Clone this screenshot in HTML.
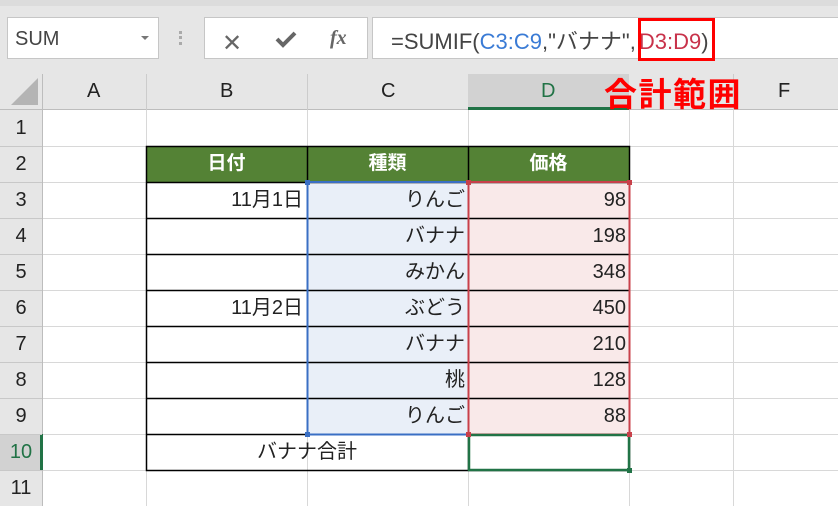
<!DOCTYPE html><html><head><meta charset="utf-8"><style>
*{margin:0;padding:0;box-sizing:border-box}
body{width:838px;height:506px;overflow:hidden;background:#fff;font-family:"Liberation Sans","Noto Sans CJK JP",sans-serif;position:relative}
.a{position:absolute}
.t{font-size:20px;color:#222}
</style></head><body>
<div class="a" style="left:0;top:0;width:838px;height:110px;background:#e6e6e6"></div>
<div class="a" style="left:0;top:0;width:838px;height:6px;background:#dcdcdc"></div>
<div class="a" style="left:7px;top:17px;width:152px;height:42px;background:#fff;border:1px solid #c6c6c6"></div>
<div class="a t" style="left:15px;top:28px;color:#444">SUM</div>
<div class="a" style="left:141px;top:36px;border-left:4px solid transparent;border-right:4px solid transparent;border-top:4px solid #777"></div>
<div class="a" style="left:179px;top:31px;width:3px;height:14px;border-left:3px dotted #aaa"></div>
<div class="a" style="left:204px;top:17px;width:164px;height:42px;background:#fff;border:1px solid #c6c6c6"></div>
<div class="a" style="left:222px;top:29px;font-size:24px;color:#666">✕</div>
<svg class="a" style="left:274px;top:30px" width="24" height="18"><path d="M3 9 L9 15 L21 3" stroke="#666" stroke-width="4" fill="none"/></svg>
<div class="a" style="left:330px;top:27px;font-family:'Liberation Serif',serif;font-style:italic;font-weight:bold;font-size:20px;color:#666">fx</div>
<div class="a" style="left:372px;top:17px;width:466px;height:42px;background:#fff;border:1px solid #c6c6c6;border-right:none"></div>
<div class="a" style="left:391px;top:24px;font-size:22px;color:#444;white-space:nowrap">=SUMIF(<span style="color:#3a7bd5">C3:C9</span>,"バナナ",<span style="color:#c8324a;margin-left:3px">D3:D9</span>)</div>
<div class="a" style="left:638px;top:18px;width:77px;height:43px;border:3px solid #f00"></div>
<div class="a" style="left:0;top:109px;width:838px;height:1px;background:#bdbdbd"></div>
<div class="a" style="left:42px;top:74px;width:1px;height:432px;background:#bdbdbd"></div>
<svg class="a" style="left:11px;top:78px" width="28" height="28"><path d="M27 0 L27 27 L0 27 Z" fill="#b4b4b4"/></svg>
<div class="a" style="left:468px;top:74px;width:161px;height:36px;background:#d2d2d2"></div>
<div class="a" style="left:468px;top:107px;width:161px;height:3px;background:#217346"></div>
<div class="a t" style="left:87px;top:80px">A</div>
<div class="a t" style="left:220px;top:80px">B</div>
<div class="a t" style="left:381px;top:80px">C</div>
<div class="a t" style="left:541px;top:80px;color:#217346">D</div>
<div class="a t" style="left:778px;top:80px">F</div>
<div class="a" style="left:146px;top:74px;width:1px;height:36px;background:#ccc"></div>
<div class="a" style="left:307px;top:74px;width:1px;height:36px;background:#ccc"></div>
<div class="a" style="left:733px;top:74px;width:1px;height:36px;background:#ccc"></div>
<div class="a" style="left:604px;top:68px;font-size:33px;font-weight:bold;color:#f00;letter-spacing:1.5px">合計範囲</div>
<div class="a" style="left:0;top:110px;width:42px;height:396px;background:#e6e6e6"></div>
<div class="a" style="left:0;top:434px;width:42px;height:36px;background:#d2d2d2"></div>
<div class="a" style="left:40px;top:434px;width:3px;height:36px;background:#217346"></div>
<svg class="a" style="left:0;top:0" width="838" height="506">
<g stroke="#d8d8d8" stroke-width="1">
<line x1="43" y1="146.5" x2="838" y2="146.5"/><line x1="43" y1="182.5" x2="838" y2="182.5"/><line x1="43" y1="218.5" x2="838" y2="218.5"/><line x1="43" y1="254.5" x2="838" y2="254.5"/><line x1="43" y1="290.5" x2="838" y2="290.5"/><line x1="43" y1="326.5" x2="838" y2="326.5"/><line x1="43" y1="362.5" x2="838" y2="362.5"/><line x1="43" y1="398.5" x2="838" y2="398.5"/><line x1="43" y1="434.5" x2="838" y2="434.5"/><line x1="43" y1="470.5" x2="838" y2="470.5"/>
<line x1="146.5" y1="110" x2="146.5" y2="506"/><line x1="307.5" y1="110" x2="307.5" y2="506"/><line x1="468.5" y1="110" x2="468.5" y2="506"/><line x1="629.5" y1="110" x2="629.5" y2="506"/><line x1="733.5" y1="110" x2="733.5" y2="506"/>
</g>
<g stroke="#c8c8c8"><line x1="0" y1="146.5" x2="42" y2="146.5"/><line x1="0" y1="182.5" x2="42" y2="182.5"/><line x1="0" y1="218.5" x2="42" y2="218.5"/><line x1="0" y1="254.5" x2="42" y2="254.5"/><line x1="0" y1="290.5" x2="42" y2="290.5"/><line x1="0" y1="326.5" x2="42" y2="326.5"/><line x1="0" y1="362.5" x2="42" y2="362.5"/><line x1="0" y1="398.5" x2="42" y2="398.5"/><line x1="0" y1="434.5" x2="42" y2="434.5"/><line x1="0" y1="470.5" x2="42" y2="470.5"/></g>
<rect x="146.5" y="146.5" width="483" height="36" fill="#548235"/>
<rect x="307.5" y="182.5" width="161" height="252" fill="#e9eff8"/>
<rect x="468.5" y="182.5" width="161" height="252" fill="#f9e9e9"/>
<g stroke="#000" stroke-width="1.5" fill="none">
<rect x="146.5" y="146.5" width="483" height="324"/>
<line x1="307.5" y1="146" x2="307.5" y2="434"/><line x1="468.5" y1="146" x2="468.5" y2="470"/>
<line x1="146" y1="182.5" x2="630" y2="182.5"/><line x1="146" y1="218.5" x2="630" y2="218.5"/><line x1="146" y1="254.5" x2="630" y2="254.5"/><line x1="146" y1="290.5" x2="630" y2="290.5"/><line x1="146" y1="326.5" x2="630" y2="326.5"/><line x1="146" y1="362.5" x2="630" y2="362.5"/><line x1="146" y1="398.5" x2="630" y2="398.5"/><line x1="146" y1="434.5" x2="630" y2="434.5"/>
</g>
<rect x="307.5" y="182" width="161" height="252.5" fill="none" stroke="#3a6fc4" stroke-width="2"/>
<rect x="468.5" y="182" width="161" height="252.5" fill="none" stroke="#c8404a" stroke-width="2"/>
<rect x="469" y="435" width="160" height="35" fill="none" stroke="#217346" stroke-width="2.5"/>
<g fill="#3a6fc4"><rect x="305" y="180" width="5" height="5"/><rect x="305" y="432" width="5" height="5"/></g>
<g fill="#c8404a"><rect x="466" y="180" width="5" height="5"/><rect x="627" y="180" width="5" height="5"/><rect x="466" y="432" width="5" height="5"/><rect x="627" y="432" width="5" height="5"/></g>
<rect x="627" y="468" width="5" height="5" fill="#217346"/>
</svg>
<div class="a t" style="left:0;top:110px;width:42px;text-align:center;line-height:36px">1<br>2<br>3<br>4<br>5<br>6<br>7<br>8<br>9<br><span style="color:#217346">10</span><br>11</div>
<div class="a" style="left:146px;top:146px;width:161px;line-height:36px;text-align:center;color:#fff;font-weight:bold;font-size:19px">日付</div>
<div class="a" style="left:307px;top:146px;width:161px;line-height:36px;text-align:center;color:#fff;font-weight:bold;font-size:19px">種類</div>
<div class="a" style="left:468px;top:146px;width:161px;line-height:36px;text-align:center;color:#fff;font-weight:bold;font-size:19px">価格</div>
<div class="a t" style="left:146px;top:182px;width:157px;line-height:36px;text-align:right">11月1日<br><br><br>11月2日</div>
<div class="a t" style="left:307px;top:182px;width:158px;line-height:36px;text-align:right">りんご<br>バナナ<br>みかん<br>ぶどう<br>バナナ<br>桃<br>りんご</div>
<div class="a t" style="left:468px;top:182px;width:158px;line-height:36px;text-align:right">98<br>198<br>348<br>450<br>210<br>128<br>88</div>
<div class="a t" style="left:146px;top:434px;width:322px;line-height:36px;text-align:center">バナナ合計</div>
</body></html>
